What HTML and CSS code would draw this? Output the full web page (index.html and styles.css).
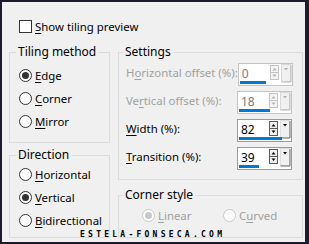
FILE: index.html
```html
<!DOCTYPE html>
<html>
<head>
<meta charset="utf-8">
<link rel="stylesheet" href="styles.css">
</head>
<body>
<div class="dialog">
  <div class="check-row"><span class="checkbox"></span><span><u>S</u>how tiling preview</span></div>
  <div class="columns">
    <div class="col">
      <fieldset class="group tiling">
        <legend>Tiling method</legend>
        <div class="radio-row"><span class="radio on"></span><span><u>E</u>dge</span></div>
        <div class="radio-row"><span class="radio"></span><span><u>C</u>orner</span></div>
        <div class="radio-row"><span class="radio"></span><span><u>M</u>irror</span></div>
      </fieldset>
      <fieldset class="group direction">
        <legend>Direction</legend>
        <div class="radio-row"><span class="radio"></span><span><u>H</u>orizontal</span></div>
        <div class="radio-row"><span class="radio on"></span><span><u>V</u>ertical</span></div>
        <div class="radio-row"><span class="radio"></span><span><u>B</u>idirectional</span></div>
      </fieldset>
    </div>
    <div class="col">
      <fieldset class="group settings">
        <legend>Settings</legend>
        <div class="field disabled">
          <span class="label">H<u>o</u>rizontal offset (%):</span>
          <div class="spin">
            <span class="value">0</span>
            <svg class="spin-btns" width="22" height="19" viewBox="0 0 22 19">
              <rect x="0.5" y="1.5" width="8" height="14" fill="#f4f4f4" stroke="#c4c4c4"/>
              <line x1="1" y1="8.5" x2="8" y2="8.5" stroke="#c4c4c4"/>
              <path d="M2.5 6.5 L4.5 4 L6.5 6.5 Z" fill="#b0b0b0"/>
              <path d="M2.5 10.5 L4.5 13 L6.5 10.5 Z" fill="#b0b0b0"/>
              <rect x="11.5" y="0.5" width="9" height="17" fill="#f0f0f0" stroke="#d8d8d8"/>
              <path d="M21 1 V18 H11.5" fill="none" stroke="#b8b8b8"/>
              <path d="M14 4 L16 6.5 L18 4 Z" fill="#b0b0b0"/>
            </svg>
            <span class="bar" style="width:26px"></span>
          </div>
        </div>
        <div class="field disabled">
          <span class="label">Ve<u>r</u>tical offset (%):</span>
          <div class="spin">
            <span class="value">18</span>
            <svg class="spin-btns" width="22" height="19" viewBox="0 0 22 19">
              <rect x="0.5" y="1.5" width="8" height="14" fill="#f4f4f4" stroke="#c4c4c4"/>
              <line x1="1" y1="8.5" x2="8" y2="8.5" stroke="#c4c4c4"/>
              <path d="M2.5 6.5 L4.5 4 L6.5 6.5 Z" fill="#b0b0b0"/>
              <path d="M2.5 10.5 L4.5 13 L6.5 10.5 Z" fill="#b0b0b0"/>
              <rect x="11.5" y="0.5" width="9" height="17" fill="#f0f0f0" stroke="#d8d8d8"/>
              <path d="M21 1 V18 H11.5" fill="none" stroke="#b8b8b8"/>
              <path d="M14 4 L16 6.5 L18 4 Z" fill="#b0b0b0"/>
            </svg>
            <span class="bar" style="width:31px"></span>
          </div>
        </div>
        <div class="field">
          <span class="label"><u>W</u>idth (%):</span>
          <div class="spin">
            <span class="value">82</span>
            <svg class="spin-btns" width="22" height="19" viewBox="0 0 22 19">
              <rect x="0.5" y="1.5" width="8" height="14" fill="#f0f0f0" stroke="#5a5a5a"/>
              <line x1="1" y1="8.5" x2="8" y2="8.5" stroke="#5a5a5a"/>
              <path d="M2.5 6.5 L4.5 4 L6.5 6.5 Z" fill="#000"/>
              <path d="M2.5 10.5 L4.5 13 L6.5 10.5 Z" fill="#000"/>
              <rect x="11.5" y="0.5" width="9" height="17" fill="#f0f0f0" stroke="#e0e0e0"/>
              <path d="M21 1 V18 H11.5" fill="none" stroke="#6a6a6a"/>
              <path d="M14 4 L16 6.5 L18 4 Z" fill="#000"/>
            </svg>
            <span class="bar" style="width:43px"></span>
          </div>
        </div>
        <div class="field">
          <span class="label"><u>T</u>ransition (%):</span>
          <div class="spin">
            <span class="value">39</span>
            <svg class="spin-btns" width="22" height="19" viewBox="0 0 22 19">
              <rect x="0.5" y="1.5" width="8" height="14" fill="#f0f0f0" stroke="#5a5a5a"/>
              <line x1="1" y1="8.5" x2="8" y2="8.5" stroke="#5a5a5a"/>
              <path d="M2.5 6.5 L4.5 4 L6.5 6.5 Z" fill="#000"/>
              <path d="M2.5 10.5 L4.5 13 L6.5 10.5 Z" fill="#000"/>
              <rect x="11.5" y="0.5" width="9" height="17" fill="#f0f0f0" stroke="#e0e0e0"/>
              <path d="M21 1 V18 H11.5" fill="none" stroke="#6a6a6a"/>
              <path d="M14 4 L16 6.5 L18 4 Z" fill="#000"/>
            </svg>
            <span class="bar" style="width:20px"></span>
          </div>
        </div>
      </fieldset>
      <fieldset class="group corner">
        <legend>Corner style</legend>
        <div class="corner-row">
          <div class="radio-row disabled"><span class="radio on"></span><span><u>L</u>inear</span></div>
          <div class="radio-row disabled"><span class="radio"></span><span>C<u>u</u>rved</span></div>
        </div>
      </fieldset>
    </div>
  </div>
  <div class="watermark">ESTELA-FONSECA.COM</div>
</div>
</body>
</html>
```
FILE: styles.css
```css
* { box-sizing: border-box; }
html, body { margin: 0; padding: 0; }
body {
  background: #1e1b2e;
  width: 309px;
  height: 244px;
  overflow: hidden;
  font-family: "Noto Sans", "Open Sans", sans-serif;
  font-size: 11.4px;
  color: #000;
}
u { text-decoration: underline; text-underline-offset: 2px; }
.dialog {
  position: relative;
  margin: 2px 0 0 2px;
  width: 303px;
  height: 240px;
  background: #f0f0f0;
  padding: 16px 0 0 7px;
}
.check-row {
  display: flex;
  align-items: center;
  gap: 3px;
  height: 17px;
  line-height: 17px;
  padding-left: 10px;
}
.checkbox {
  width: 13px;
  height: 13px;
  border: 1px solid #333;
  background: #fff;
  flex: none;
}
.columns {
  display: grid;
  grid-template-columns: 101px 185px;
  column-gap: 8px;
  margin-top: 9px;
}
.col { display: flex; flex-direction: column; }
.group {
  margin: 0;
  border: 1px solid #dcdcdc;
  min-width: 0;
}
.group legend {
  font-size: 12px;
  line-height: 16px;
  padding: 0 2px;
  margin-left: -3px;
}
.tiling { padding: 4px 8px 9px 9px; }
.direction { padding: 0 8px 5px 9px; margin-top: 4px; }
.radio-row {
  display: flex;
  align-items: center;
  gap: 3px;
  height: 23px;
  white-space: nowrap;
}
.radio {
  width: 13px;
  height: 13px;
  border: 1px solid #333;
  border-radius: 50%;
  background: #fff;
  flex: none;
  display: flex;
  align-items: center;
  justify-content: center;
}
.radio.on::after {
  content: "";
  width: 7px;
  height: 7px;
  border-radius: 50%;
  background: #333;
}
.radio-row.disabled { color: #a0a0a0; }
.radio-row.disabled .radio { border-color: #c8c8c8; }
.radio-row.disabled .radio.on::after { background: #c8c8c8; }

.settings { padding: 0 10px 7px 7px; }
.field {
  display: grid;
  grid-template-columns: 1fr 55px;
  align-items: center;
  height: 28px;
}
.label { white-space: nowrap; line-height: 16px; margin-top: -3px; }
.field.disabled .label { color: #a0a0a0; }
.spin {
  position: relative;
  height: 23px;
  border: 1px solid #9a9a9a;
  background: #fff;
  display: flex;
  align-items: flex-start;
  padding-left: 3px;
}
.field.disabled .spin { border-color: #c4c4c4; }
.value {
  flex: 1;
  font-size: 12px;
  line-height: 17px;
  padding-top: 1px;
}
.field.disabled .value { color: #7a7a7a; }
.spin-btns { flex: none; display: block; }
.bar {
  position: absolute;
  left: 1px;
  bottom: 1px;
  height: 3px;
  background: #0078d7;
}
.corner { padding: 1px 10px 10px 7px; margin-top: 7px; }
.corner-row {
  display: grid;
  grid-template-columns: 81px auto;
  margin-left: 16px;
}
.watermark {
  position: absolute;
  left: 78px;
  top: 228px;
  font-family: "DejaVu Sans Mono", monospace;
  font-weight: bold;
  font-size: 8px;
  line-height: 10px;
  letter-spacing: 3.25px;
  color: #000;
}
```
